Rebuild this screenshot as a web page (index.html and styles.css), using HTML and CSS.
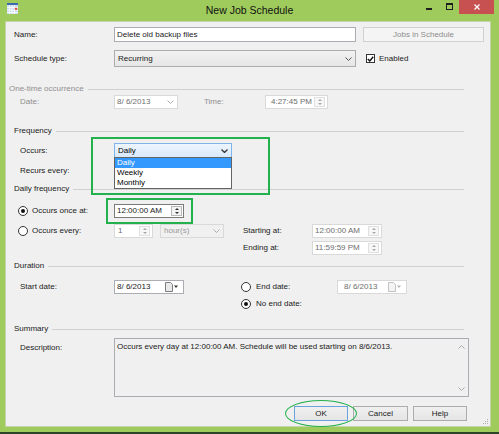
FILE: index.html
```html
<!DOCTYPE html>
<html lang="en">

<head>
  <meta charset="UTF-8" />
  <title>New Job Schedule</title>
  <link rel="stylesheet" href="styles.css">
</head>

<body>
  <div class="window">
    <div class="titlebar">
      <svg class="app-icon" viewBox="0 0 11 11">
        <rect x="0" y="0" width="11" height="11" fill="#c9dcf2" />
        <rect x="0" y="0" width="11" height="2" fill="#3d69ad" />
        <path d="M0 4.5h11M0 7h11M0 9.5h11M2.5 2v9M5 2v9M7.5 2v9" stroke="#fff" stroke-width="0.8" />
        <rect x="7.8" y="4.8" width="2.4" height="2" fill="#e2463c" />
      </svg>
      <div class="title">New Job Schedule</div>
      <div class="caption">
        <span class="cap-min"></span>
        <span class="cap-max"></span>
        <span class="cap-close">
          <svg viewBox="0 0 6 6"><path d="M0.5 0.5L5.5 5.5M5.5 0.5L0.5 5.5" stroke="#fff" stroke-width="1.2" /></svg>
        </span>
      </div>
    </div>

    <div class="client">
      <div class="row r-name">
        <span class="lbl">Name:</span>
        <div class="box w-main">Delete old backup files</div>
        <div class="btn jobs">Jobs in Schedule</div>
      </div>

      <div class="row r-type">
        <span class="lbl">Schedule type:</span>
        <div class="box combo w-main">Recurring<svg class="chev" viewBox="0 0 7 4"><path d="M0.5 0.5L3.5 3.5L6.5 0.5" fill="none" stroke="currentColor" /></svg></div>
        <span class="check">
          <svg viewBox="0 0 7 6"><path d="M0.8 3L2.8 5L6.2 0.8" fill="none" stroke="#111" stroke-width="1.4" /></svg>
        </span>
        <span class="check-lbl">Enabled</span>
      </div>

      <div class="group off g-once">One-time occurrence</div>

      <div class="row r-date">
        <span class="lbl in off">Date:</span>
        <div class="box off w-date">8/&nbsp;6/2013<svg class="chev" viewBox="0 0 7 4"><path d="M0.5 0.5L3.5 3.5L6.5 0.5" fill="none" stroke="currentColor" /></svg></div>
        <span class="time-lbl off">Time:</span>
        <div class="box off w-time4">4:27:45 PM<span class="spin"><i class="up"></i><i class="dn"></i></span></div>
      </div>

      <div class="group g-freq">Frequency</div>

      <div class="row r-occurs">
        <span class="lbl in">Occurs:</span>
        <div class="box combo focus w-occurs">Daily<svg class="chev" viewBox="0 0 7 4"><path d="M0.5 0.5L3.5 3.5L6.5 0.5" fill="none" stroke="currentColor" stroke-width="1.3" /></svg>
          <div class="list">
            <div class="sel">Daily</div>
            <div>Weekly</div>
            <div>Monthly</div>
          </div>
        </div>
      </div>

      <div class="row r-recurs">
        <span class="lbl in">Recurs every:</span>
      </div>

      <div class="group g-daily">Daily frequency</div>

      <div class="row r-once">
        <span class="opt"><span class="radio on"></span>Occurs once at:</span>
        <div class="box dark w-time">12:00:00 AM<span class="spin"><i class="up"></i><i class="dn"></i></span></div>
      </div>

      <div class="row r-every">
        <span class="opt"><span class="radio"></span>Occurs every:</span>
        <div class="box off w-num">1<span class="spin"><i class="up"></i><i class="dn"></i></span></div>
        <div class="box combo off w-unit">hour(s)<svg class="chev" viewBox="0 0 7 4"><path d="M0.5 0.5L3.5 3.5L6.5 0.5" fill="none" stroke="currentColor" /></svg></div>
        <span class="range-lbl">Starting at:</span>
        <div class="box off w-time">12:00:00 AM<span class="spin"><i class="up"></i><i class="dn"></i></span></div>
      </div>

      <div class="row r-ending">
        <span class="range-lbl">Ending at:</span>
        <div class="box off w-time">11:59:59 PM<span class="spin"><i class="up"></i><i class="dn"></i></span></div>
      </div>

      <div class="group g-duration">Duration</div>

      <div class="row r-start">
        <span class="lbl in">Start date:</span>
        <div class="box w-sdate">8/&nbsp;6/2013<svg class="cal" viewBox="0 0 14 10">
            <path d="M0.5 0.5H5.5L7.5 2.5V9.5H0.5Z" fill="#e9e9e9" stroke="#7d7d7d" />
            <path d="M9 3.5H13L11 6Z" fill="#3a3a3a" />
          </svg></div>
        <span class="radio end-radio"></span>
        <span class="end-lbl">End date:</span>
        <div class="box off w-edate">8/&nbsp;6/2013<svg class="cal" viewBox="0 0 14 10">
            <path d="M0.5 0.5H5.5L7.5 2.5V9.5H0.5Z" fill="#f4f4f4" stroke="#c2c2c2" />
            <path d="M9 3.5H13L11 6Z" fill="#b5b5b5" />
          </svg></div>
      </div>

      <div class="row r-noend">
        <span class="radio on"></span>
        <span class="noend-lbl">No end date:</span>
      </div>

      <div class="group g-summary">Summary</div>

      <div class="row r-desc">
        <span class="lbl in desc-lbl">Description:</span>
        <div class="desc">
          <span>Occurs every day at 12:00:00 AM. Schedule will be used starting on 8/6/2013.</span>
          <span class="scroll">
            <svg viewBox="0 0 7 4"><path d="M0.5 3.5L3.5 0.5L6.5 3.5" fill="none" stroke="#a8a8a8" /></svg>
            <svg viewBox="0 0 7 4"><path d="M0.5 0.5L3.5 3.5L6.5 0.5" fill="none" stroke="#a8a8a8" /></svg>
          </span>
        </div>
      </div>

      <div class="row r-buttons">
        <div class="btn default w-ok">OK</div>
        <div class="btn w-cancel">Cancel</div>
        <div class="btn w-ok">Help</div>
      </div>

      <!-- annotation marks drawn over the dialog -->
      <div class="mark mark-occurs"></div>
      <div class="mark mark-once"></div>
      <div class="mark mark-ok"></div>

      <svg class="grip" viewBox="0 0 6 6">
        <rect x="4" y="0" width="1" height="1" fill="#b0b0b0" />
        <rect x="2" y="2" width="1" height="1" fill="#b0b0b0" />
        <rect x="4" y="2" width="1" height="1" fill="#b0b0b0" />
        <rect x="0" y="4" width="1" height="1" fill="#b0b0b0" />
        <rect x="2" y="4" width="1" height="1" fill="#b0b0b0" />
        <rect x="4" y="4" width="1" height="1" fill="#b0b0b0" />
      </svg>
    </div>
  </div>
</body>

</html>
```

FILE: styles.css
```css
* {
  box-sizing: border-box;
  margin: 0;
  padding: 0;
}

body {
  width: 499px;
  height: 434px;
  overflow: hidden;
  background: #2c4527;
  font-family: "Liberation Sans", Arial, sans-serif;
  font-size: 8px;
  line-height: 10px;
  color: #1a1a1a;
}

.window {
  width: 499px;
  height: 432px;
  background: #9fcb5c;
}

/* title bar */

.titlebar {
  height: 21px;
  display: grid;
  grid-template-columns: 1fr auto 1fr;
}

.app-icon {
  display: block;
  width: 11px;
  height: 11px;
  margin: 3px 0 0 7px;
}

.title {
  font-size: 10.5px;
  line-height: 20px;
  color: #111;
}

.caption {
  display: flex;
  justify-content: flex-end;
  align-items: flex-start;
  padding-right: 5px;
}

.cap-min {
  width: 6px;
  height: 2px;
  background: #1e1e1e;
  margin: 8px 14px 0 0;
}

.cap-max {
  width: 7px;
  height: 7px;
  border: 1px solid #1e1e1e;
  border-top-width: 2px;
  margin: 3px 6px 0 0;
}

.cap-close {
  width: 35px;
  height: 14px;
  background: #c75050;
  display: flex;
  align-items: center;
  justify-content: center;
}

.cap-close svg {
  width: 6px;
  height: 6px;
}

/* client area */

.client {
  position: relative;
  width: 486px;
  height: 406px;
  margin-left: 5px;
  background: #f0f0f0;
  border: 1px solid #c2d4a8;
  display: flex;
  flex-direction: column;
}

.row {
  display: flex;
  align-items: center;
  flex-shrink: 0;
  height: 14px;
}

.r-name { margin-top: 5px; height: 15px; }
.r-type { margin-top: 8px; height: 17px; }
.g-once { margin-top: 17px; }
.r-date { margin-top: 1px; }
.g-freq { margin-top: 17px; }
.r-occurs { margin-top: 7px; height: 15px; }
.r-recurs { margin-top: 6px; }
.g-daily { margin-top: 6px; }
.r-once { margin-top: 10px; }
.r-every { margin-top: 6px; }
.r-ending { margin-top: 3px; padding-left: 237px; }
.g-duration { margin-top: 6px; }
.r-start { margin-top: 9px; }
.r-noend { margin-top: 3px; padding-left: 235px; }
.g-summary { margin-top: 13px; width: 463px; }
.r-desc { margin-top: 4px; height: 59px; align-items: flex-start; }

.r-buttons {
  margin-top: 9px;
  height: 15px;
  justify-content: flex-end;
  gap: 5px;
  padding-right: 23px;
}

.group {
  display: flex;
  align-items: center;
  flex-shrink: 0;
  width: 458px;
  height: 10px;
  padding-left: 8px;
}

.group::after {
  content: "";
  flex: 1;
  height: 1px;
  background: #d0d0d0;
  margin-left: 4px;
}

.group.off {
  padding-left: 3px;
}

.off {
  color: #8f8f8f;
}

.lbl {
  width: 108px;
  padding-left: 8px;
  flex-shrink: 0;
  white-space: nowrap;
}

.lbl.in {
  padding-left: 14px;
}

.desc-lbl {
  margin-top: 5px;
}

.opt {
  width: 108px;
  padding-left: 12px;
  display: flex;
  align-items: center;
  gap: 4px;
  flex-shrink: 0;
  white-space: nowrap;
}

/* controls */

.box {
  height: 100%;
  display: flex;
  align-items: center;
  flex-shrink: 0;
  background: #fff;
  border: 1px solid #abadb3;
  padding-left: 2px;
  white-space: nowrap;
}

.box.off {
  border-color: #d9d9d9;
  color: #6d6d6d;
}

.box.dark {
  border-color: #7a7a7a;
}

.combo {
  background: linear-gradient(#f2f2f2, #e6e6e6);
  border-color: #acacac;
  padding-left: 3px;
}

.combo.focus {
  position: relative;
  background: linear-gradient(#edf5fd, #d9eafb);
  border-color: #7eb4ea;
  color: #000;
}

.combo.off {
  background: #f0f0f0;
  color: #9a9a9a;
}

.chev {
  width: 7px;
  height: 4px;
  margin-left: auto;
  margin-right: 3px;
  color: #555;
}

.off .chev {
  color: #b0b0b0;
}

.focus .chev {
  color: #333;
}

.spin {
  margin-left: auto;
  margin-right: 1px;
  width: 11px;
  height: 10px;
  display: flex;
  flex-direction: column;
  border: 1px solid #b8b8b8;
  background: #f3f3f3;
}

.box.off .spin {
  margin-right: 2px;
  border-color: #e0e0e0;
  background: #f7f7f7;
}

.spin i {
  flex: 1;
  display: flex;
  align-items: center;
  justify-content: center;
}

.spin i::after {
  content: "";
  border-left: 2px solid transparent;
  border-right: 2px solid transparent;
}

.spin .up::after {
  border-bottom: 2px solid #333;
}

.spin .dn::after {
  border-top: 2px solid #333;
}

.box.off .spin .up::after {
  border-bottom-color: #a8a8a8;
}

.box.off .spin .dn::after {
  border-top-color: #a8a8a8;
}

.cal {
  width: 14px;
  height: 10px;
  margin-left: auto;
  margin-right: 4px;
}

.w-main { width: 242px; }
.w-date { width: 64px; }
.w-time4 { width: 63px; padding-left: 5px; }
.w-occurs { width: 118px; }
.w-time { width: 70px; }
.w-num { width: 39px; padding-left: 3px; }
.w-unit { width: 64px; margin-left: 7px; }
.w-sdate { width: 70px; }
.w-edate { width: 70px; padding-left: 6px; }

.time-lbl {
  margin-left: 26px;
  width: 61px;
}

.range-lbl {
  margin-left: 19px;
  width: 69px;
}

.r-ending .range-lbl {
  margin-left: 0;
}

.end-radio {
  margin-left: 57px;
}

.end-lbl {
  margin-left: 5px;
  width: 81px;
}

.noend-lbl {
  margin-left: 5px;
}

.check {
  width: 9px;
  height: 9px;
  margin-left: 10px;
  border: 1px solid #333;
  background: #fff;
  display: flex;
  align-items: center;
  justify-content: center;
}

.check svg {
  width: 7px;
  height: 6px;
}

.check-lbl {
  margin-left: 4px;
}

.radio {
  width: 10px;
  height: 10px;
  flex-shrink: 0;
  border: 1px solid #333;
  border-radius: 50%;
  background: #fff;
  display: flex;
  align-items: center;
  justify-content: center;
}

.radio.on::after {
  content: "";
  width: 4px;
  height: 4px;
  border-radius: 50%;
  background: #111;
}

.list {
  position: absolute;
  left: -1px;
  top: 100%;
  width: 118px;
  background: #fff;
  border: 1px solid #646464;
  z-index: 2;
}

.list div {
  height: 10px;
  padding-left: 2px;
}

.list .sel {
  background: #3399ff;
  color: #fff;
}

.desc {
  width: 355px;
  height: 59px;
  display: flex;
  justify-content: space-between;
  background: #f0f0f0;
  border: 1px solid #abadb3;
  padding: 3px 0 0 2px;
}

.scroll {
  width: 7px;
  margin-right: 3px;
  display: flex;
  flex-direction: column;
  justify-content: space-between;
  padding: 3px 0 5px;
}

.scroll svg {
  width: 7px;
  height: 4px;
}

.btn {
  height: 15px;
  display: flex;
  align-items: center;
  justify-content: center;
  flex-shrink: 0;
  background: linear-gradient(#f0f0f0, #e5e5e5);
  border: 1px solid #acacac;
}

.btn.default {
  border-color: #6aa2dc;
}

.btn.jobs {
  width: 121px;
  margin-left: 7px;
  background: #f4f4f4;
  border-color: #d0d0d0;
  color: #8d8d8d;
}

.w-ok { width: 54px; }
.w-cancel { width: 55px; }

/* green annotations */

.mark {
  position: absolute;
  border: 2px solid #22b14c;
  pointer-events: none;
}

.mark-occurs {
  left: 85px;
  top: 115px;
  width: 179px;
  height: 58px;
}

.mark-once {
  left: 100px;
  top: 176px;
  width: 87px;
  height: 26px;
}

.mark-ok {
  left: 279px;
  top: 378px;
  width: 72px;
  height: 27px;
  border-width: 1.5px;
  border-radius: 50%;
}

.grip {
  position: absolute;
  right: 1px;
  bottom: 1px;
  width: 6px;
  height: 6px;
}
```
